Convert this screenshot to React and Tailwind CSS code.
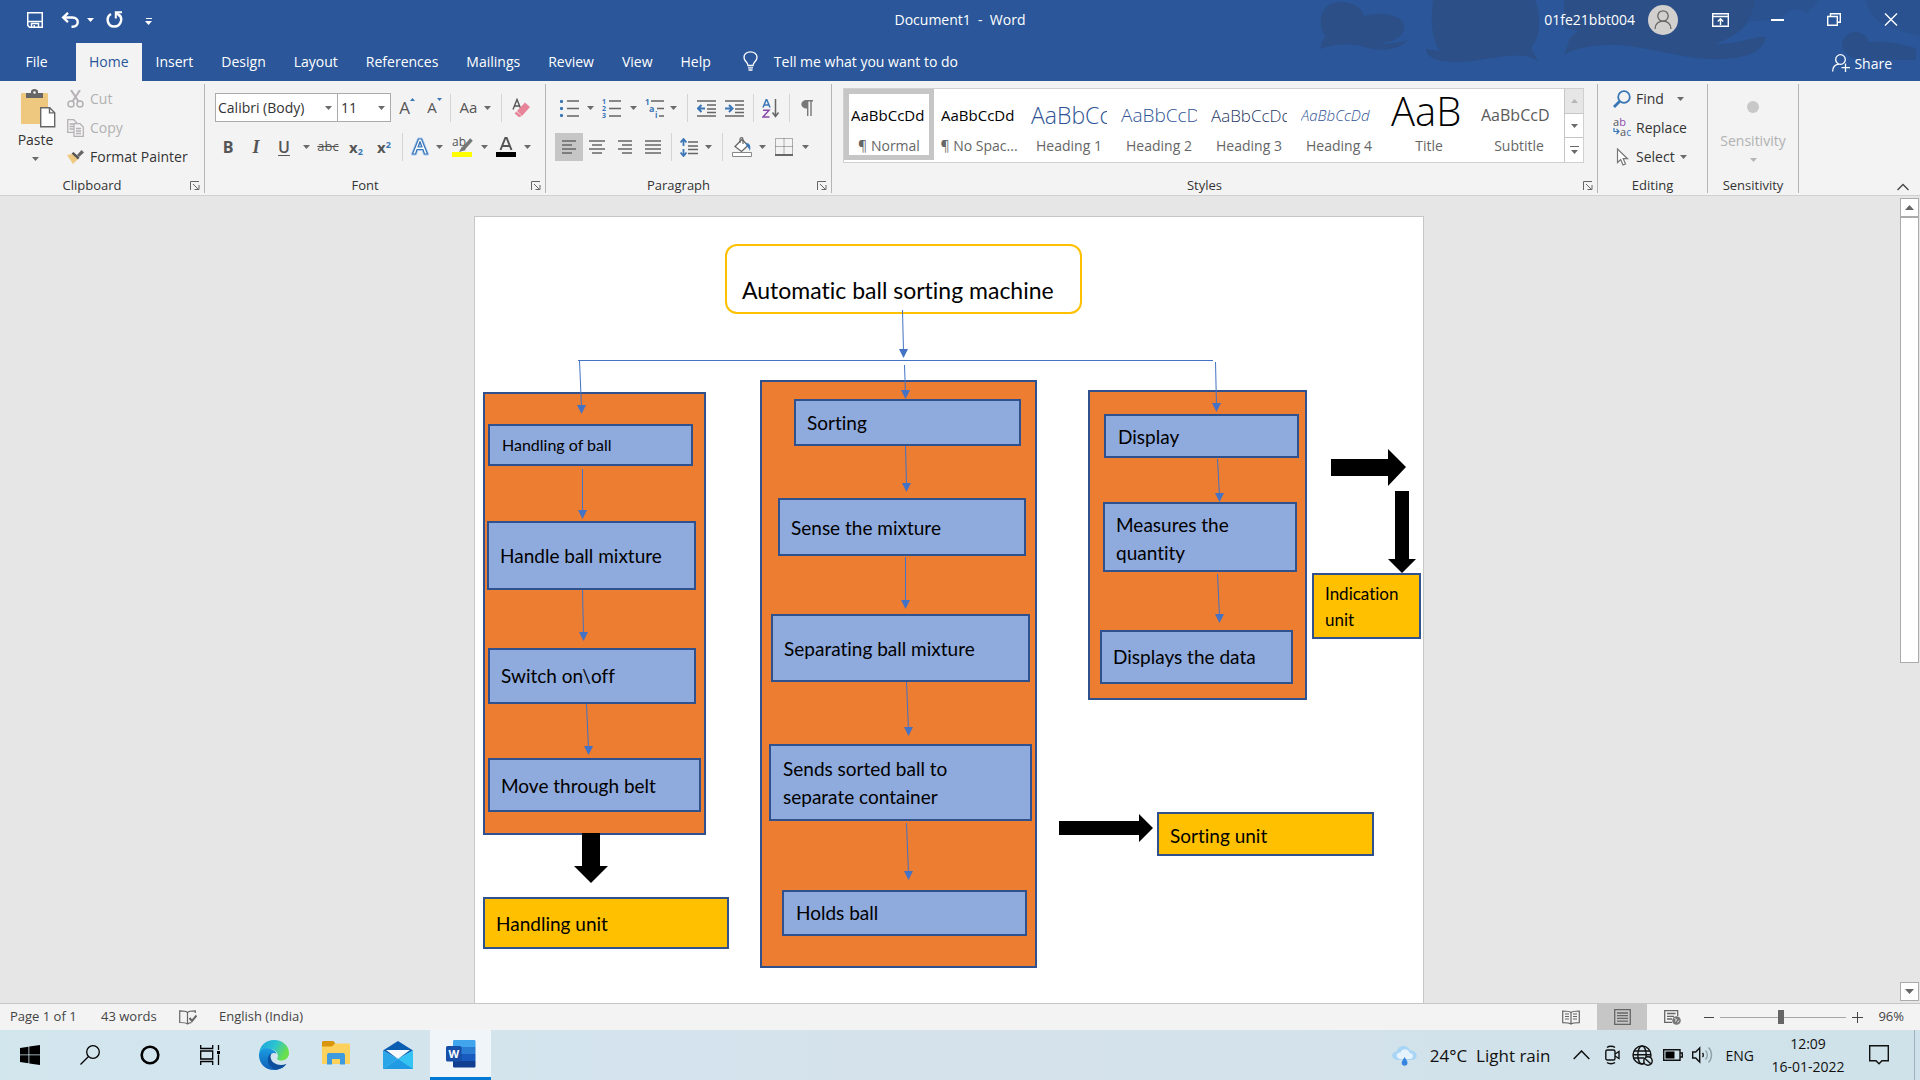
import React from "react";

const cx = (...parts) => parts.filter(Boolean).join(" ");

/* ---------- small building blocks ---------- */

function Caret({ className = "text-[#6a6a6a]" }) {
  return (
    <svg width="7" height="4" viewBox="0 0 7 4" className={className} aria-hidden="true">
      <path d="M0 0h7L3.5 4z" fill="currentColor" />
    </svg>
  );
}

function Tool({ label, w = "w-7", active, children }) {
  return (
    <button
      type="button"
      aria-label={label}
      className={cx("flex h-7 shrink-0 items-center justify-center text-[#555]", w, active && "bg-[#c6c6c6]")}
    >
      {children}
    </button>
  );
}

function Drop({ label, w = "w-2" }) {
  return (
    <button type="button" aria-label={label} className={cx("flex h-7 shrink-0 items-center justify-center", w)}>
      <Caret />
    </button>
  );
}

function Sep({ w = "w-2" }) {
  return (
    <span className={cx("flex h-7 shrink-0 justify-center", w)}>
      <span className="w-px bg-[#d4d4d4]" />
    </span>
  );
}

function Group({ title, w, launcher = true, children }) {
  return (
    <section aria-label={title} className={cx("flex shrink-0 flex-col pt-[3px] pb-[2px]", w)}>
      <div className="flex flex-1 flex-col border-r border-[#b5b5b5]">
        <div className="flex-1">{children}</div>
        <div className="flex h-4 items-center">
          <span className="flex-1 text-center text-[13px] leading-4 text-[#333]">{title}</span>
          {launcher && (
            <button type="button" aria-label={`${title} settings`} className="flex w-5 justify-center">
              <svg width="11" height="9" viewBox="0 0 11 9" fill="none" stroke="#666">
                <path d="M1.500 9V.5H10M4 3l5 5M10 4v4.500H5.500" />
              </svg>
            </button>
          )}
        </div>
      </div>
    </section>
  );
}

/* ---------- title bar and tabs ---------- */

function Backdrop() {
  return (
    <svg
      className="pointer-events-none absolute top-0 right-0"
      width="640"
      height="81"
      viewBox="0 0 640 81"
      fill="#2b4f86"
      aria-hidden="true"
    >
      <path d="M46 37C36 24 40 2 60 2C75 2 82 9 84 16C100 12 120 14 124 24C125 34 118 42 100 43C108 45 120 42 128 40C120 50 100 52 85 47C70 43 55 43 40 49C41 43 43 39 46 37Z" />
      <path d="M153 0C150 20 152 40 160 51L146 49C146 58 160 63 180 62C210 60 230 52 250 57L258 61C256 55 251 52 252 46C262 35 260 10 255 0Z" />
      <path d="M284 0V28L298 31L290 38L284 55C300 45 330 43 350 46C390 52 420 64 460 57C478 54 486 44 485 37C478 35 460 44 435 44C465 34 476 15 475 0Z" />
      <path d="M585 0C592 20 600 27 640 36V0ZM475 0C474 10 470 18 465 22C480 20 500 22 508 12C516 8 522 8 526 14L540 0Z" fill="#2a5291" />
      <path d="M562 46C562 36 570 31 578 32C586 34 590 40 588 42C605 40 620 44 636 48V60L580 60C570 58 564 54 562 46Z" fill="#2b5089" />
    </svg>
  );
}

const TABS = ["Home", "Insert", "Design", "Layout", "References", "Mailings", "Review", "View", "Help"];

function Header() {
  return (
    <header className="relative h-[81px] shrink-0 bg-[#2b579a] text-white">
      <Backdrop />
      <div className="relative flex h-[43px] items-center pb-1">
        <div className="flex flex-1 items-center">
          <button type="button" aria-label="Save" className="ml-[27px]">
            <svg width="16" height="16" viewBox="0 0 16 16" fill="none" stroke="white" strokeWidth="1.500">
              <path d="M.75.75h14.500v14.500H2.500L.75 13.500z" />
              <path d="M1 9.500h14" />
              <path d="M4.500 15.500v-4h7v4" />
              <path d="M6.500 13h1.500v2.500H6.500z" fill="white" stroke="none" />
            </svg>
          </button>
          <button type="button" aria-label="Undo" className="ml-[18px]">
            <svg width="19" height="16" viewBox="0 0 19 16" fill="none" stroke="white" strokeWidth="2.400">
              <path d="M2 5.500h9.500c7 0 7 9.300 0 9.300h-1" />
              <path d="M7 .8L2.200 5.500L7 10.200" />
            </svg>
          </button>
          <button type="button" aria-label="Undo history" className="ml-[7px]">
            <Caret className="text-white" />
          </button>
          <button type="button" aria-label="Repeat" className="ml-[12px]">
            <svg width="17" height="17" viewBox="0 0 17 17" fill="none" stroke="white" strokeWidth="2.400">
              <path d="M5 3C-.5 6 1 15.500 8.200 15.500C15.500 15.500 17.500 6 12 3" />
              <path d="M16 1.200H9.800V7.500" strokeWidth="2" />
              <path d="M10 1.500l4 4" strokeWidth="2" />
            </svg>
          </button>
          <button type="button" aria-label="Customize toolbar" className="ml-[22px] flex flex-col items-center gap-[2px] pt-1">
            <span className="h-px w-[6px] bg-white" />
            <Caret className="text-white" />
          </button>
        </div>
        <h1 className="text-[14px] whitespace-pre">Document1  -  Word</h1>
        <div className="flex flex-1 items-center justify-end">
          <span className="text-[14px]">01fe21bbt004</span>
          <button type="button" aria-label="Account" className="ml-[13px]">
            <svg width="30" height="30" viewBox="0 0 30 30" fill="none" stroke="#666" strokeWidth="1.300">
              <circle cx="15" cy="15" r="15" fill="#d2d0ce" stroke="none" />
              <circle cx="15" cy="11" r="5.200" />
              <path d="M7 24C7 13.500 23 13.500 23 24" />
            </svg>
          </button>
          <button type="button" aria-label="Ribbon display options" className="ml-[34px]">
            <svg width="17" height="14" viewBox="0 0 17 14" fill="none" stroke="white" strokeWidth="1.400">
              <path d="M.7.7h15.600v12.600H.7zM.7 3.500h15.600" />
              <path d="M8.500 12V6M5.800 8.500L8.500 5.800l2.700 2.700" />
            </svg>
          </button>
          <button type="button" aria-label="Minimize" className="ml-[42px]">
            <span className="block h-[2px] w-[13px] bg-white" />
          </button>
          <button type="button" aria-label="Restore" className="ml-[43px]">
            <svg width="14" height="13" viewBox="0 0 14 13" fill="none" stroke="white" strokeWidth="1.400">
              <path d="M.7 3.500h9.600v8.800H.7zM3.500 3.500V.7h9.800v8.500h-3" />
            </svg>
          </button>
          <button type="button" aria-label="Close" className="mr-[22px] ml-[43px]">
            <svg width="14" height="13" viewBox="0 0 14 13" stroke="white" strokeWidth="1.400">
              <path d="M1 .5l12 12M13 .5L1 12.500" />
            </svg>
          </button>
        </div>
      </div>
      <nav className="relative flex h-[38px] text-[14px]">
        <button type="button" className="w-[76px] pr-[3px] pb-[2px]">File</button>
        {TABS.map((tab, i) => (
          <button
            key={tab}
            type="button"
            className={cx("pb-[2px]", i === 0 ? "bg-[#f3f3f3] px-[13px] text-[#2b579a]" : "px-[14px]")}
          >
            {tab}
          </button>
        ))}
        <button type="button" className="ml-[18px] flex items-center gap-4 pb-[2px]">
          <svg width="15" height="20" viewBox="0 0 15 20" fill="none" stroke="white" strokeWidth="1.300">
            <path d="M5 14.500C5 11 1 10.500 1 6.500C1 3 4 .8 7.500.8S14 3 14 6.500C14 10.500 10 11 10 14.500zM5 16.800h5M5.500 19h4" />
          </svg>
          Tell me what you want to do
        </button>
        <button type="button" className="ml-auto flex items-center gap-1 pt-[2px] pr-[28px]">
          <svg width="18" height="18" viewBox="0 0 18 18" fill="none" stroke="white" strokeWidth="1.300">
            <circle cx="8.500" cy="5.500" r="4.800" />
            <path d="M.7 17.500C.7 13 3 10.500 7 10.200M13.500 9.500v8.500M9.500 13.700h8.500" />
          </svg>
          Share
        </button>
      </nav>
    </header>
  );
}

/* ---------- ribbon icons ---------- */

function LinesIcon({ rows, w = 18 }) {
  return (
    <svg width={w} height={rows.length * 4} viewBox={`0 0 ${w} ${rows.length * 4}`} stroke="#666" strokeWidth="1.500">
      {rows.map(([a, b], i) => (
        <path key={i} d={`M${a} ${i * 4 + 2}H${b}`} />
      ))}
    </svg>
  );
}

function IndentIcon({ dir }) {
  return (
    <svg width="19" height="17" viewBox="0 0 19 17" fill="none" stroke="#666" strokeWidth="1.500">
      <path d="M0 1h19M10 5h9M10 9h9M10 12.500h9M0 16h19" />
      <path
        d={dir === "out" ? "M8 8.500H2M4.500 5L1 8.500L4.500 12" : "M0 8.500h6M4 5l3.500 3.500L4 12"}
        stroke="#3a76b5"
        strokeWidth="2"
      />
    </svg>
  );
}

function ListIcon({ marks }) {
  return (
    <svg width="19" height="19" viewBox="0 0 19 19">
      <path d="M7 2h12M7 9.500h12M7 17h12" stroke="#666" strokeWidth="1.500" />
      {marks ? (
        <g fill="#3a76b5" fontSize="7" fontWeight="700">
          <text x="0" y="5">1</text>
          <text x="0" y="12">2</text>
          <text x="0" y="19">3</text>
        </g>
      ) : (
        <g fill="#3a76b5">
          <rect x="0" y="1" width="3" height="3" rx="1" />
          <rect x="0" y="8" width="3" height="3" rx="1" />
          <rect x="0" y="15" width="3" height="3" rx="1" />
        </g>
      )}
    </svg>
  );
}

function ClipboardGroup() {
  return (
    <Group title="Clipboard" w="w-[205px]">
      <div className="flex">
        <button type="button" className="flex w-[67px] flex-col items-center pt-[5px] pl-[8px] text-[14px] text-[#333]">
          <svg width="36" height="39" viewBox="0 0 36 39">
            <rect x="1" y="4" width="27" height="31" rx="1" fill="#edc87e" />
            <path d="M6 9V4h5V2.500C11 1 12.500 0 14.500 0S18 1 18 2.500V4h5v5z" fill="#666" />
            <circle cx="14.500" cy="3.500" r="1.300" fill="#f3f3f3" />
            <path d="M20.700 18.700h9l5 5v14h-14z" fill="#fff" stroke="#666" strokeWidth="1.400" />
            <path d="M29.500 18.700v5.200h5.200" fill="none" stroke="#666" strokeWidth="1.400" />
          </svg>
          <span className="mt-[1px] mr-1">Paste</span>
          <span className="mt-[3px] mr-1 flex h-3 items-center"><Caret /></span>
        </button>
        <div className="flex flex-col text-[14px]">
          <button type="button" className="flex h-[29px] items-center gap-[6px] text-[#b1b1b1]">
            <svg width="17" height="18" viewBox="0 0 17 18" fill="none" stroke="#b5b1b5" strokeWidth="1.500">
              <circle cx="4" cy="14" r="3" />
              <circle cx="13" cy="14" r="3" />
              <path d="M4 0l7.500 11.500M13 0L5.500 11.500" strokeWidth="2" />
            </svg>
            Cut
          </button>
          <button type="button" className="flex h-[29px] items-center gap-[6px] text-[#b1b1b1]">
            <svg width="17" height="18" viewBox="0 0 17 18" fill="#f3f3f3" stroke="#b5b1b5" strokeWidth="1.300">
              <path d="M.7.7h6l3 3v9.600h-9z" />
              <path d="M2.500 5h5M2.500 7.500h5M2.500 10h4" />
              <path d="M7 4.700h6l3.300 3.300v9.300H7z" />
              <path d="M9 9.500h5M9 12h5M9 14.500h5" />
            </svg>
            Copy
          </button>
          <button type="button" className="flex h-[29px] items-center gap-[6px] text-[#333]">
            <svg width="17" height="16" viewBox="0 0 17 16">
              <path d="M0 6l6 9 5-5-5-5z" fill="#edc87e" />
              <path d="M4.500 4.500l2-1.500 6 5.500-1.500 2z" fill="#555" />
              <path d="M10 6l4.500-5L17 3.500l-5 4.500z" fill="#666" />
            </svg>
            Format Painter
          </button>
        </div>
      </div>
    </Group>
  );
}

function FontGroup() {
  return (
    <Group title="Font" w="w-[341px]">
      <div className="flex flex-col gap-[11px] pt-[9px] pl-[9px]">
        <div className="flex items-center pl-px">
          <div className="flex text-[14px] text-[#333]">
            <label className="flex h-[29px] w-[123px] items-center border border-[#ababab] bg-white pr-[5px] pl-[2px]">
              <input aria-label="Font name" defaultValue="Calibri (Body)" className="h-6 w-0 min-w-0 flex-1 outline-none" />
              <Caret />
            </label>
            <label className="-ml-px flex h-[29px] w-[54px] items-center border border-[#ababab] bg-white pr-[5px] pl-[3px]">
              <input aria-label="Font size" defaultValue="11" className="h-6 w-0 min-w-0 flex-1 outline-none" />
              <Caret />
            </label>
          </div>
          <Tool label="Increase font size" w="w-8">
            <span className="text-[17px]">A</span>
            <svg width="5" height="3" viewBox="0 0 5 3" className="mb-4"><path d="M0 3L2.500 0L5 3z" fill="#3a76b5" /></svg>
          </Tool>
          <Tool label="Decrease font size" w="w-[23px]">
            <span className="text-[15px]">A</span>
            <svg width="5" height="3" viewBox="0 0 5 3" className="mb-4"><path d="M0 0h5L2.500 3z" fill="#3a76b5" /></svg>
          </Tool>
          <Sep />
          <Tool label="Change case" w="w-[29px]"><span className="text-[15px]">Aa</span></Tool>
          <Drop label="Case options" />
          <Sep w="w-5" />
          <Tool label="Clear formatting" w="w-5">
            <svg width="18" height="19" viewBox="0 0 18 19">
              <path d="M1 11.500L5 1.500L9 11.500M2.500 8h5" fill="none" stroke="#555" strokeWidth="1.400" />
              <path d="M5 13l8-8.500 5 4.500-8 9z" fill="#e8849a" />
              <path d="M3.500 14.500l5 4.300" stroke="#e8849a" strokeWidth="2.500" />
            </svg>
          </Tool>
        </div>
        <div className="flex items-center">
          <Tool label="Bold"><b className="text-[16px]">B</b></Tool>
          <Tool label="Italic"><i className="font-['Liberation_Serif'] text-[18px] font-bold">I</i></Tool>
          <Tool label="Underline"><u className="text-[16px] font-semibold underline-offset-2">U</u></Tool>
          <Drop label="Underline options" w="w-4" />
          <Tool label="Strikethrough"><s className="text-[13px]">abc</s></Tool>
          <Tool label="Subscript"><b className="text-[15px]">x<sub className="text-[9px] text-[#3a76b5]">2</sub></b></Tool>
          <Tool label="Superscript"><b className="text-[15px]">x<sup className="text-[9px] text-[#3a76b5]">2</sup></b></Tool>
          <Sep />
          <Tool label="Text effects">
            <svg width="18" height="20" viewBox="0 0 18 20" fill="none" strokeLinejoin="round">
              <path d="M1.500 17L7.500 2h3l6 15h-3l-1.500-4.500H6L4.500 17zM7 10h4L9 4.500z" stroke="#a9cbf0" strokeWidth="3" />
              <path d="M1.500 17L7.500 2h3l6 15h-3l-1.500-4.500H6L4.500 17zM7 10h4L9 4.500z" stroke="#3a76b5" strokeWidth="1.200" fill="#fff" />
            </svg>
          </Tool>
          <Drop label="Effects options" w="w-[10px]" />
          <Tool label="Highlight" w="w-9">
            <svg width="21" height="20" viewBox="0 0 21 20">
              <text x="0" y="9" fontSize="12" fill="#555">ab</text>
              <path d="M19.500 2.500L11 12" stroke="#777" strokeWidth="3.500" />
              <path d="M10 9.500l4 3.500-7 2z" fill="#777" />
              <path d="M0 15h20v5H0z" fill="#ffff00" />
            </svg>
          </Tool>
          <Drop label="Highlight colour" w="w-[9px]" />
          <Tool label="Font colour" w="w-[34px]">
            <svg width="20" height="20" viewBox="0 0 20 20">
              <path d="M4.500 13L9.300 1h1.400l4.800 12M6.500 9h7" fill="none" stroke="#555" strokeWidth="2" />
              <path d="M0 15h20v5H0z" />
            </svg>
          </Tool>
          <Drop label="Font colour options" />
        </div>
      </div>
    </Group>
  );
}

function ParagraphGroup() {
  return (
    <Group title="Paragraph" w="w-[286px]">
      <div className="flex flex-col gap-[11px] pt-[9px] pl-[9px]">
        <div className="flex items-center pt-px">
          <Tool label="Bullets"><ListIcon /></Tool>
          <Drop label="Bullet options" w="w-[14px]" />
          <Tool label="Numbering" w="w-[29px]"><ListIcon marks /></Tool>
          <Drop label="Numbering options" w="w-[14px]" />
          <Tool label="Multilevel list">
            <svg width="19" height="19" viewBox="0 0 19 19">
              <path d="M6 2h13M12 9.500h7M14 17h5" stroke="#666" strokeWidth="1.500" />
              <g fill="#3a76b5" fontSize="8" fontWeight="700">
                <text x="0" y="6">1</text>
                <text x="4" y="13" fontSize="9">a</text>
                <text x="10" y="19">i</text>
              </g>
            </svg>
          </Tool>
          <Drop label="Multilevel options" w="w-[10px]" />
          <Sep w="w-[18px]" />
          <Tool label="Decrease indent" w="w-5"><IndentIcon dir="out" /></Tool>
          <Tool label="Increase indent" w="w-9"><IndentIcon dir="in" /></Tool>
          <Sep w="w-[2px]" />
          <Tool label="Sort" w="w-[34px]">
            <svg width="18" height="19" viewBox="0 0 18 19" fill="none">
              <path d="M1 8.500L4.500 0L8 8.500M2 6h5" stroke="#3a76b5" strokeWidth="1.500" />
              <path d="M1 11.200h6L1 18h6.500" stroke="#8a4ba8" strokeWidth="1.500" />
              <path d="M13.500 0v17M10.500 13.500l3 4 3-4" stroke="#666" strokeWidth="1.500" />
            </svg>
          </Tool>
          <Sep w="w-[2px]" />
          <Tool label="Show marks" w="w-[34px]">
            <svg width="12" height="16" viewBox="0 0 12 16" fill="none" stroke="#777" strokeWidth="1.400">
              <path d="M12 .7H4.500M6.700 1v15M10 1v15" />
              <path d="M6 0C-1.500 0-1.500 8.500 6 8.500z" fill="#777" stroke="none" />
            </svg>
          </Tool>
        </div>
        <div className="flex items-center">
          <Tool label="Align left" active><LinesIcon w={14} rows={[[0, 14], [0, 10], [0, 14], [0, 10]]} /></Tool>
          <Tool label="Center"><LinesIcon w={16} rows={[[0, 16], [3, 13], [0, 16], [3, 13]]} /></Tool>
          <Tool label="Align right"><LinesIcon w={14} rows={[[0, 14], [4, 14], [0, 14], [4, 14]]} /></Tool>
          <Tool label="Justify"><LinesIcon w={16} rows={[[0, 16], [0, 16], [0, 16], [0, 16]]} /></Tool>
          <Sep />
          <Tool label="Line spacing">
            <svg width="18" height="19" viewBox="0 0 18 19" fill="none">
              <path d="M8 4h10M8 8h10M8 11.500h10M8 15.500h10" stroke="#666" strokeWidth="1.500" />
              <path d="M3.500 2v6M3.500 11v6M.5 4.500l3-3.500 3 3.500M.5 14.500l3 3.500 3-3.500" stroke="#3a76b5" strokeWidth="1.800" />
            </svg>
          </Tool>
          <Drop label="Spacing options" w="w-[10px]" />
          <Sep w="w-[18px]" />
          <Tool label="Shading" w="w-[22px]">
            <svg width="20" height="20" viewBox="0 0 20 20" fill="none">
              <path d="M3 9.500L10 2.500l6 6-6.500 6z" fill="#fff" stroke="#666" strokeWidth="1.300" />
              <path d="M8 6V2.500C8 0 11 0 11 2.500V7" stroke="#666" strokeWidth="1.200" />
              <path d="M14 6c4 0 5 3 4 8-1-2.500-2-4-3.500-5z" fill="#3a76b5" />
              <path d="M.5 15.500h19v4H.5z" fill="#fff" stroke="#888" />
            </svg>
          </Tool>
          <Drop label="Shading options" w="w-[18px]" />
          <Tool label="Borders" w="w-[26px]">
            <svg width="18" height="18" viewBox="0 0 18 18" fill="none" stroke="#666">
              <path d="M.5.5h17v16H.5zM9 .5v16M.5 8.500h17" strokeDasharray="1 1" />
              <path d="M0 17h18" strokeWidth="2" />
            </svg>
          </Tool>
          <Drop label="Border options" w="w-4" />
        </div>
      </div>
    </Group>
  );
}

const STYLES = [
  { name: "¶ Normal", sample: "AaBbCcDd", look: "text-[15px] text-black" },
  { name: "¶ No Spac...", sample: "AaBbCcDd", look: "text-[15px] text-black" },
  { name: "Heading 1", sample: "AaBbCc", look: "text-[23px] font-light text-[#2f5496]" },
  { name: "Heading 2", sample: "AaBbCcD", look: "text-[19px] font-light text-[#2f5496]" },
  { name: "Heading 3", sample: "AaBbCcDd", look: "text-[17px] font-light text-[#1f3763]" },
  { name: "Heading 4", sample: "AaBbCcDd", look: "text-[15px] font-light italic text-[#2f5496]" },
  { name: "Title", sample: "AaB", look: "pb-2 text-[40px] font-light text-black" },
  { name: "Subtitle", sample: "AaBbCcD", look: "text-[16px] text-[#5a5a5a]" },
];

function StylesGroup() {
  return (
    <Group title="Styles" w="w-[766px]">
      <div className="flex pt-1 pl-[11px]">
        <div className="flex h-[75px] border border-[#d0d0d0] bg-white">
          {STYLES.map((s, i) => (
            <button
              key={s.name}
              type="button"
              className={cx(
                "flex h-[71px] w-[90px] flex-col items-center border-5 text-center",
                i === 0 ? "border-[#c6c6c6]" : "border-transparent"
              )}
            >
              <span
                className={cx(
                  "flex h-[42px] w-[76px] items-center overflow-hidden leading-none whitespace-nowrap",
                  s.look
                )}
              >
                {s.sample}
              </span>
              <span className="pt-px text-[14px] leading-[18px] whitespace-nowrap text-[#666]">{s.name}</span>
            </button>
          ))}
          <div className="flex w-[19px] flex-col divide-y divide-[#c6c6c6] border-l border-[#c6c6c6]">
            <button type="button" aria-label="Previous styles" className="flex flex-1 items-center justify-center bg-[#e6e6e6]">
              <svg width="7" height="4" viewBox="0 0 7 4"><path d="M0 4h7L3.500 0z" fill="#b5b5b5" /></svg>
            </button>
            <button type="button" aria-label="Next styles" className="flex flex-1 items-center justify-center"><Caret /></button>
            <button type="button" aria-label="More styles" className="flex flex-1 flex-col items-center justify-center gap-[3px]">
              <span className="h-px w-[9px] bg-[#666]" />
              <Caret />
            </button>
          </div>
        </div>
      </div>
    </Group>
  );
}

function EditingGroup() {
  return (
    <Group title="Editing" w="w-[110px]" launcher={false}>
      <div className="flex flex-col pl-[15px] text-[14px] text-[#333]">
        <button type="button" className="flex h-[29px] items-center gap-[5px]">
          <svg width="18" height="18" viewBox="0 0 18 18" fill="none" stroke="#3a76b5">
            <circle cx="11" cy="7" r="5.800" strokeWidth="1.800" />
            <path d="M6.500 11.500L1 17" strokeWidth="2.800" />
          </svg>
          Find
          <span className="ml-2"><Caret /></span>
        </button>
        <button type="button" className="flex h-[29px] items-center gap-[5px]">
          <svg width="18" height="20" viewBox="0 0 18 20" fill="none">
            <text x="0" y="8" fontSize="11" fill="#555">a<tspan fill="#8a4ba8">b</tspan></text>
            <text x="7" y="18" fontSize="11" fill="#555">a<tspan fill="#3a76b5">c</tspan></text>
            <path d="M1 10v3.500h4.500M3.500 11l2.500 2.500L3.500 16" stroke="#3a76b5" strokeWidth="1.200" />
          </svg>
          Replace
        </button>
        <button type="button" className="flex h-[29px] items-center gap-[5px]">
          <svg width="18" height="18" viewBox="0 0 18 18" fill="#fff" stroke="#777" strokeWidth="1.200">
            <path d="M4.500 1v13.500L7.700 11.500L10 17l2.500-1-2.300-5.300h4.300z" />
          </svg>
          Select <Caret />
        </button>
      </div>
    </Group>
  );
}

function SensitivityGroup() {
  return (
    <Group title="Sensitivity" w="w-[91px]" launcher={false}>
      <button type="button" className="flex w-full flex-col items-center pt-[17px] text-[14px] text-[#b1b1b1]">
        <span className="h-3 w-3 rounded-full bg-[#c8c8c8]" />
        <span className="mt-[17px]">Sensitivity</span>
        <span className="mt-[3px] flex h-3 items-center"><Caret className="text-[#b5b5b5]" /></span>
      </button>
    </Group>
  );
}

function Ribbon() {
  return (
    <div className="flex h-[115px] shrink-0 border-b border-[#d0d0d0] bg-[#f3f3f3]">
      <ClipboardGroup />
      <FontGroup />
      <ParagraphGroup />
      <StylesGroup />
      <EditingGroup />
      <SensitivityGroup />
      <button type="button" aria-label="Collapse ribbon" className="mt-auto mr-[11px] mb-1 ml-auto">
        <svg width="12" height="8" viewBox="0 0 12 8" fill="none" stroke="#444" strokeWidth="1.300">
          <path d="M.5 7L6 1.500L11.500 7" />
        </svg>
      </button>
    </div>
  );
}

/* ---------- document canvas ---------- */

const PANELS = [
  "left-[8px] top-[175px] w-[223px] h-[443px]",
  "left-[285px] top-[163px] w-[277px] h-[588px]",
  "left-[613px] top-[173px] w-[219px] h-[310px]",
];

const BLUE = "bg-[#8faadc] ";
const GOLD = "bg-[#ffc000] ";

const NODES = [
  { text: "Handling of ball", at: BLUE + "left-[13px] top-[207px] w-[205px] h-[42px] pt-[7px] pl-[12px] text-[16px] leading-6" },
  { text: "Handle ball mixture", at: BLUE + "left-[12px] top-[304px] w-[209px] h-[69px] pt-[19px] pl-[11px]" },
  { text: "Switch on\\off", at: BLUE + "left-[13px] top-[431px] w-[208px] h-[56px] pt-[12px] pl-[11px]" },
  { text: "Move through belt", at: BLUE + "left-[13px] top-[541px] w-[213px] h-[54px] pt-[12px] pl-[11px]" },
  { text: "Handling unit", at: GOLD + "left-[8px] top-[680px] w-[246px] h-[52px] pt-[11px] pl-[11px]" },
  { text: "Sorting", at: BLUE + "left-[319px] top-[182px] w-[227px] h-[47px] pt-[8px] pl-[11px]" },
  { text: "Sense the mixture", at: BLUE + "left-[303px] top-[281px] w-[248px] h-[58px] pt-[14px] pl-[11px]" },
  { text: "Separating ball mixture", at: BLUE + "left-[296px] top-[397px] w-[259px] h-[68px] pt-[19px] pl-[11px]" },
  { text: "Sends sorted ball to separate container", at: BLUE + "left-[294px] top-[527px] w-[263px] h-[77px] pt-[9px] pl-[12px] pr-[50px]" },
  { text: "Holds ball", at: BLUE + "left-[307px] top-[673px] w-[245px] h-[46px] pt-[7px] pl-[12px]" },
  { text: "Display", at: BLUE + "left-[629px] top-[197px] w-[195px] h-[44px] pt-[7px] pl-[12px]" },
  { text: "Measures the quantity", at: BLUE + "left-[628px] top-[285px] w-[194px] h-[70px] pt-[7px] pl-[11px] pr-[40px]" },
  { text: "Displays the data", at: BLUE + "left-[625px] top-[413px] w-[193px] h-[54px] pt-[11px] pl-[11px]" },
  { text: "Indication unit", at: GOLD + "left-[837px] top-[356px] w-[109px] h-[66px] pt-[6px] pl-[11px] pr-[4px] text-[17px] leading-[26px]" },
  { text: "Sorting unit", at: GOLD + "left-[682px] top-[595px] w-[217px] h-[44px] pt-[8px] pl-[11px]" },
];

const ARROWS = [
  [427, 93, 428, 141],
  [104, 143, 106, 197],
  [429, 148, 430, 182],
  [740, 145, 741, 195],
  [107, 252, 107, 302],
  [107, 373, 108, 424],
  [111, 487, 113, 538],
  [430, 229, 431, 275],
  [430, 340, 430, 392],
  [431, 465, 433, 519],
  [431, 606, 433, 663],
  [742, 242, 744, 285],
  [742, 357, 744, 406],
];

function Diagram() {
  return (
    <div className="relative h-full font-['Lato'] text-black [font-variant-ligatures:none]">
      <div className="absolute top-[27px] left-[250px] h-[70px] w-[357px] rounded-[12px] border-2 border-[#ffc000]">
        <p className="mt-[29px] h-[28px] overflow-hidden pl-[15px] text-[23px] leading-[30px] whitespace-nowrap">
          Automatic ball sorting machine
        </p>
      </div>
      {PANELS.map((p) => (
        <div key={p} className={cx("absolute border-2 border-[#2f528f] bg-[#ed7d31]", p)} />
      ))}
      {NODES.map((n) => (
        <div
          key={n.text}
          className={cx("absolute border-2 border-[#2f528f]", n.at, !n.at.includes("text-[") && "text-[19px] leading-7")}
        >
          {n.text}
        </div>
      ))}
      <svg
        className="pointer-events-none absolute top-0 left-0"
        width="948"
        height="786"
        viewBox="0 0 948 786"
        aria-hidden="true"
      >
        <g stroke="#4472c4" fill="#4472c4">
          <path d="M103 143.500H738" />
          {ARROWS.map(([x1, y1, x2, y2]) => (
            <g key={`${x1}-${y1}`}>
              <path d={`M${x1 + 0.5} ${y1}L${x2 + 0.5} ${y2 - 6}`} />
              <path d={`M${x2 - 4} ${y2 - 9}h9l-4.500 9z`} stroke="none" />
            </g>
          ))}
        </g>
        <g fill="#000">
          <path d="M107 616H125V649H133L116 666L99 649H107Z" />
          <path d="M856 242H913V232L931 250L913 269V259H856Z" />
          <path d="M920 274H934V342H941L927 356L913 342H920Z" />
          <path d="M584 604H664V597L678 611L664 625V618H584Z" />
        </g>
      </svg>
    </div>
  );
}

function Workspace() {
  return (
    <div className="flex min-h-0 flex-1 bg-[#e6e6e6]">
      <main className="flex min-w-0 flex-1 justify-center overflow-hidden pt-5 pr-[2px]">
        <div className="w-[950px] border border-b-0 border-[#c6c6c6] bg-white">
          <Diagram />
        </div>
      </main>
      <div className="flex w-5 flex-col pt-[2px] pr-px pb-[2px]">
        <button type="button" aria-label="Scroll up" className="flex h-[19px] items-center justify-center border border-[#ababab] bg-white">
          <svg width="9" height="5" viewBox="0 0 9 5"><path d="M0 5h9L4.500 0z" fill="#666" /></svg>
        </button>
        <div className="h-[446px] border border-[#ababab] bg-white" />
        <button type="button" aria-label="Scroll down" className="mt-auto flex h-[19px] items-center justify-center border border-[#ababab] bg-white">
          <svg width="9" height="5" viewBox="0 0 9 5"><path d="M0 0h9L4.500 5z" fill="#666" /></svg>
        </button>
      </div>
    </div>
  );
}

/* ---------- status bar ---------- */

function StatusBar() {
  return (
    <footer className="flex h-[27px] shrink-0 items-center border-t border-[#c6c6c6] bg-[#f3f3f3] text-[13px] text-[#444]">
      <span className="ml-[10px] w-[91px]">Page 1 of 1</span>
      <span className="w-[78px]">43 words</span>
      <button type="button" aria-label="Proofing">
        <svg width="18" height="15" viewBox="0 0 18 15" fill="none" stroke="#666" strokeWidth="1.200">
          <path d="M8.500 14C7 12.500 3 12.500.7 12.500V.8C4 .8 7 .8 8.500 2.500C10 .8 13 .8 16.300.8V3M8.500 2.500V14.500M8.500 14c1-1 2-1.400 4-1.400" />
          <path d="M10.500 8l2.500 3 4.500-5.500" strokeWidth="2" />
        </svg>
      </button>
      <span className="ml-[22px]">English (India)</span>
      <div className="ml-auto flex h-full items-center pr-4">
        <button type="button" aria-label="Read mode" className="mr-[17px]">
          <svg width="18" height="15" viewBox="0 0 18 15" fill="none" stroke="#666" strokeWidth="1.200">
            <path d="M9 14C7.500 12.600 4 12.600.7 12.600V1C4 1 7.500 1 9 2.500C10.500 1 14 1 17.300 1v11.600C14 12.600 10.500 12.600 9 14zM9 2.500v12" />
            <path d="M3 4h4M3 6.500h4M3 9h4M11 4h4M11 6.500h4M11 9h4" />
          </svg>
        </button>
        <button type="button" aria-label="Print layout" className="flex h-full w-[50px] items-center justify-center bg-[#c6c6c6]">
          <svg width="17" height="16" viewBox="0 0 17 16" fill="none" stroke="#666" strokeWidth="1.300">
            <path d="M.7.7h15.600v14.600H.7zM3 4h11M3 6.700h11M3 9.400h11M3 12.100h11" />
          </svg>
        </button>
        <button type="button" aria-label="Web layout" className="ml-[17px]">
          <svg width="17" height="15" viewBox="0 0 17 15" fill="none" stroke="#666" strokeWidth="1.300">
            <path d="M8 12.300H.7V.7h13V6M3 3.500h8.500M3 6.300h7M3 9h5" />
            <circle cx="12.500" cy="10.500" r="4.300" fill="#777" stroke="none" />
            <path d="M10.500 8.500l2 1-1 2M13.500 12.500l1.500-2" stroke="#f3f3f3" strokeWidth="1" />
          </svg>
        </button>
        <button type="button" aria-label="Zoom out" className="ml-[23px] h-px w-[10px] bg-[#444]" />
        <input
          type="range"
          aria-label="Zoom"
          min="0"
          max="200"
          defaultValue="96"
          className="mx-[6px] h-4 w-[126px] appearance-none bg-transparent [&::-webkit-slider-runnable-track]:h-[14px] [&::-webkit-slider-runnable-track]:bg-[linear-gradient(#a6a6a6,#a6a6a6)] [&::-webkit-slider-runnable-track]:bg-[length:100%_1px] [&::-webkit-slider-runnable-track]:bg-center [&::-webkit-slider-runnable-track]:bg-no-repeat [&::-webkit-slider-thumb]:h-[14px] [&::-webkit-slider-thumb]:w-[6px] [&::-webkit-slider-thumb]:appearance-none [&::-webkit-slider-thumb]:bg-[#666]"
        />
        <button type="button" aria-label="Zoom in">
          <svg width="11" height="11" viewBox="0 0 11 11" stroke="#444"><path d="M0 5.500h11M5.500 0v11" /></svg>
        </button>
        <span className="ml-[15px]">96%</span>
      </div>
    </footer>
  );
}

/* ---------- taskbar ---------- */

function EdgeIcon() {
  return (
    <svg width="30" height="30" viewBox="0 0 30 30">
      <defs>
        <linearGradient id="edgeTop" x1="0" y1="0" x2="1" y2="0.400">
          <stop offset="0" stopColor="#1c9fe0" />
          <stop offset="0.550" stopColor="#2cc3d2" />
          <stop offset="1" stopColor="#6be04a" />
        </linearGradient>
        <linearGradient id="edgeLow" x1="0" y1="0" x2="0" y2="1">
          <stop offset="0" stopColor="#1b9de2" />
          <stop offset="1" stopColor="#0f5fb8" />
        </linearGradient>
      </defs>
      <path d="M0 14C1 5 7 0 15 0C24 0 30 6 30 13C30 18 26 20.500 22 20.500C19 20.500 17.500 19.500 18.500 18C20 15.500 18 10 12 9C6 8 1.500 11 0 14Z" fill="url(#edgeTop)" />
      <path d="M0 14C1.500 9.500 6 7.500 10.500 8.500C15 9.500 17 12 17.500 13.500C12 11 9 17 12 22C14 26 20 28 26 25C23.500 28.500 19 30 15 30C6 30-.5 23 0 14Z" fill="url(#edgeLow)" />
      <path d="M10.500 14.500C6.500 20 10 29 18 29.600C22 29 25.500 27 27.500 23.800C20 27 13 23 12 19C11.500 17 11 15.500 12.500 13.500Z" fill="#0c4f9c" />
    </svg>
  );
}

function Taskbar() {
  return (
    <div className="flex h-[50px] shrink-0 bg-linear-to-r from-[#d2e6ee] via-[#d5e2ec] to-[#cfe2e9] text-[#111]">
      <button type="button" aria-label="Start" className="flex w-[60px] items-center justify-center">
        <svg width="20" height="20" viewBox="0 0 20 20"><path d="M0 3l8.500-1.300v7.800H0zM9.300 1.600L20 0v9.500H9.300zM0 10.300h8.500v8L0 17zM9.300 10.300H20V20L9.300 18.400z" /></svg>
      </button>
      <button type="button" aria-label="Search" className="flex w-[60px] items-center justify-center">
        <svg width="20" height="20" viewBox="0 0 20 20" fill="none" stroke="#000" strokeWidth="1.300"><circle cx="13" cy="7" r="6.300" /><path d="M8.500 11.500L.5 19.500" /></svg>
      </button>
      <button type="button" aria-label="Cortana" className="flex w-[60px] items-center justify-center">
        <svg width="20" height="20" viewBox="0 0 20 20" fill="none" stroke="#000" strokeWidth="2.600"><circle cx="10" cy="10" r="8.300" /></svg>
      </button>
      <button type="button" aria-label="Task view" className="flex w-[60px] items-center justify-center">
        <svg width="20" height="20" viewBox="0 0 20 20" fill="none" stroke="#000" strokeWidth="1.300"><path d="M.7 0v3.500h12V0M.7 20v-3.500h12V20M.7 6h12v8H.7zM18.500 0v5M18.500 9.500V20" /><rect x="17" y="6" width="3" height="3" fill="#000" stroke="none" /></svg>
      </button>
      <button type="button" aria-label="Edge" className="ml-[3px] flex w-[62px] items-center justify-center"><EdgeIcon /></button>
      <button type="button" aria-label="File Explorer" className="flex w-[62px] items-center justify-center pb-1">
        <svg width="28" height="24" viewBox="0 0 28 24">
          <path d="M0 1.500C0 .5.5 0 1.500 0H10.500C12 0 12.500 1 13 2V6H0Z" fill="#d9960a" />
          <path d="M0 5.500L10 5.500L13 2.500H26.500C27.500 2.500 28 3 28 4V21.500C28 22.500 27.500 23 26.500 23H1.500C.5 23 0 22.500 0 21.500Z" fill="#fdd25c" />
          <path d="M5 23.500V14C5 12.800 5.800 12 7 12H21C22.200 12 23 12.800 23 14V23.500H18V18H10V23.500Z" fill="#3f9be0" />
        </svg>
      </button>
      <button type="button" aria-label="Mail" className="flex w-[61px] items-center justify-center">
        <svg width="30" height="28" viewBox="0 0 30 28">
          <path d="M0 9.500L15 0L30 9.500L15 18Z" fill="#0a5db0" />
          <path d="M3 9H27L15 18Z" fill="#f7fafd" />
          <path d="M0 9.500L15 18L0 28Z" fill="#2aa5e8" />
          <path d="M30 9.500L15 18L0 28H30Z" fill="#35c3f3" />
          <path d="M15 18L30 28H0Z" fill="#1584d8" opacity="0.650" />
        </svg>
      </button>
      <button type="button" aria-label="Word" className="ml-[2px] flex w-[61px] items-center justify-center border-b-3 border-[#0078d4] bg-[#eff5f9]">
        <svg width="30" height="28" viewBox="0 0 30 28">
          <path d="M7 1.500C7 .5 7.500 0 8.500 0H28C29 0 29.500.5 29.500 1.500V7H7Z" fill="#41a5ee" />
          <path d="M7 7H29.500V14H7Z" fill="#2b7cd3" />
          <path d="M7 14H29.500V21H7Z" fill="#185abd" />
          <path d="M7 21H29.500V26C29.500 27 29 27.500 28 27.500H8.500C7.500 27.500 7 27 7 26Z" fill="#103f91" />
          <rect x="0" y="6" width="15.500" height="15.500" rx="1.500" fill="#174fa8" />
          <text x="7.800" y="18" fontSize="11" fontWeight="700" fill="#fff" textAnchor="middle">W</text>
        </svg>
      </button>

      <div className="ml-auto flex items-center">
        <button type="button" className="flex items-center gap-[13px] pt-[2px] text-[17px] whitespace-pre">
          <svg width="25" height="20" viewBox="0 0 25 20">
            <path d="M6 14C-1.500 14-1.500 6 4.500 5.500C6-1.500 16-2 18 4.500C26 4 27 14 20 14Z" fill="#a8d4f5" />
            <path d="M8 13C3 12 4 6 8.500 6.500C10 2 17 2 17.500 7C22 7 22 13 18 13Z" fill="#e6f3fd" />
            <path d="M12.500 11C14.500 14 15.500 15.500 15.500 17C15.500 20.500 9.700 20.500 9.700 17C9.700 15.500 11 14 12.500 11Z" fill="#3584e0" />
          </svg>
          24°C  Light rain
        </button>
        <button type="button" aria-label="Hidden icons" className="ml-[22px]">
          <svg width="17" height="10" viewBox="0 0 17 10" fill="none" stroke="#111" strokeWidth="1.500"><path d="M.7 9L8.500 1l7.800 8" /></svg>
        </button>
        <svg width="15" height="20" viewBox="0 0 15 20" fill="none" stroke="#111" strokeWidth="1.400" className="ml-[15px]">
          <rect x=".8" y="5" width="9.200" height="10" rx="1.500" />
          <path d="M10 9l4-2.500v7L10 11M2 2.500C4 .8 8 .8 10 2.500M2 17.500c2 1.700 6 1.700 8 0" />
        </svg>
        <svg width="21" height="21" viewBox="0 0 21 21" fill="none" stroke="#111" strokeWidth="1.400" className="ml-3">
          <circle cx="10" cy="10" r="9" />
          <ellipse cx="10" cy="10" rx="4.200" ry="9" />
          <path d="M2 6h16M1 13h11M1 9.700h18" />
          <circle cx="16" cy="16" r="4.200" fill="#d2e2ea" />
          <path d="M13 13.500l6 5.500" />
        </svg>
        <svg width="20" height="12" viewBox="0 0 20 12" fill="none" stroke="#111" strokeWidth="1.400" className="ml-[10px]">
          <path d="M.7.700h16.300v10.600H.7zM17.500 4h1.800v4h-1.800" />
          <path d="M2.500 2.500h9v7h-9z" fill="#000" stroke="none" />
        </svg>
        <svg width="21" height="18" viewBox="0 0 21 18" fill="none" stroke="#111" strokeWidth="1.400" className="ml-[9px]">
          <path d="M.7 6h3l4-4v14l-4-4h-3zM10.500 7c1 1 1 3 0 4" />
          <path d="M13.500 4.500c2.500 2.500 2.500 6.500 0 9M16.500 1.500c4 4 4 11 0 15" stroke="#8fa0a8" />
        </svg>
        <span className="ml-[13px] text-[14px]">ENG</span>
        <div className="ml-[15px] flex w-[78px] flex-col items-center text-[14px] leading-[23px]">
          <span>12:09</span>
          <span>16-01-2022</span>
        </div>
        <button type="button" aria-label="Notifications" className="ml-[22px]">
          <svg width="20" height="20" viewBox="0 0 20 20" fill="none" stroke="#111" strokeWidth="1.400"><path d="M.7.7h18.600v15H13l-3 3-3-3H.7z" /></svg>
        </button>
        <span className="mr-[5px] ml-[25px] h-[50px] w-px bg-[#9fb2bb]" />
      </div>
    </div>
  );
}

export default function App() {
  return (
    <div className="flex h-screen flex-col overflow-hidden font-['Open_Sans','Noto_Sans',sans-serif]">
      <Header />
      <Ribbon />
      <Workspace />
      <StatusBar />
      <Taskbar />
    </div>
  );
}
